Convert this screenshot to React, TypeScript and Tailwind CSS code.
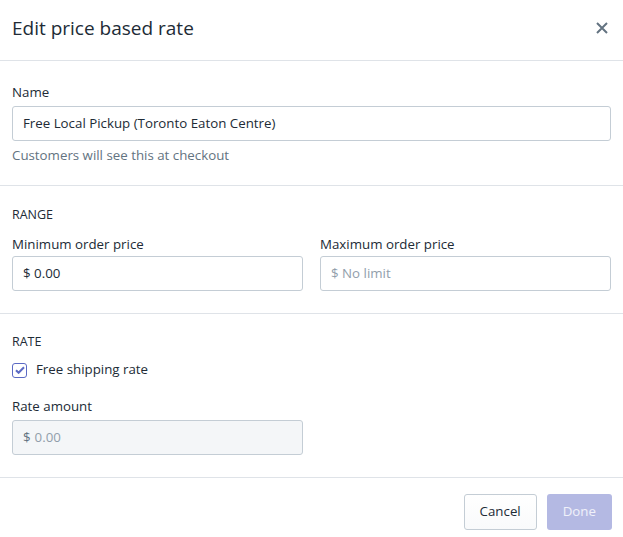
import React from 'react';

const font = { fontFamily: '"Open Sans", "Noto Sans", Arial, sans-serif' };

const Label: React.FC<{ children: React.ReactNode; className?: string }> = ({ children, className = 'mb-1' }) => (
  <div className={`text-[13.3px] leading-5 text-[#212b36] ${className}`}>{children}</div>
);

const Heading: React.FC<{ children: React.ReactNode }> = ({ children }) => (
  <div className="text-[12.5px] leading-4 font-medium uppercase text-[#212b36]">{children}</div>
);

const fieldClass =
  'h-[35px] flex items-center px-[10px] border border-[#c4cdd5] rounded-[3px] text-[13.3px]';

export default function App() {
  return (
    <div className="w-[623px] h-[537px] bg-white overflow-hidden text-[#212b36]" style={font}>
      {/* Header */}
      <div className="h-[61px] flex items-center justify-between pl-3 pr-[15px] pb-[4px] border-b border-[#dfe3e8]">
        <h2 className="text-[19px] leading-7 text-[#212b36]">Edit price based rate</h2>
        <button className="text-[#637381]">
          <svg width="12" height="12" viewBox="0 0 12 12" fill="none" stroke="currentColor" strokeWidth="2">
            <path d="M1 1l10 10M11 1L1 11" />
          </svg>
        </button>
      </div>

      {/* Name */}
      <div className="px-3 pt-[21px] pb-5 border-b border-[#dfe3e8]">
        <Label>Name</Label>
        <div className={fieldClass}>Free Local Pickup (Toronto Eaton Centre)</div>
        <div className="mt-1 text-[13.3px] leading-5 text-[#637381]">Customers will see this at checkout</div>
      </div>

      {/* Range */}
      <div className="px-3 pt-[21px] pb-[22px] border-b border-[#dfe3e8]">
        <Heading>Range</Heading>
        <div className="grid grid-cols-2 gap-[17px] mt-[11px]">
          <div>
            <Label className="mb-[2px]">Minimum order price</Label>
            <div className={fieldClass}>$ 0.00</div>
          </div>
          <div>
            <Label className="mb-[2px]">Maximum order price</Label>
            <div className={`${fieldClass} text-[#919eab]`}>$ No limit</div>
          </div>
        </div>
      </div>

      {/* Rate */}
      <div className="px-3 pt-5 pb-[22px] border-b border-[#dfe3e8]">
        <Heading>Rate</Heading>
        <label className="mt-[10px] flex items-center gap-[9px] h-5">
          <span className="w-[15px] h-[15px] rounded-[3px] border border-[#5c6ac4] flex items-center justify-center">
            <svg width="10" height="8" viewBox="0 0 10 8" fill="none" stroke="#5c6ac4" strokeWidth="2">
              <path d="M1 4.2l2.6 2.6L9 1.2" />
            </svg>
          </span>
          <span className="text-[13.3px]">Free shipping rate</span>
        </label>
        <div className="mt-4 grid grid-cols-2 gap-[17px]">
          <div>
            <Label>Rate amount</Label>
            <div className={`${fieldClass} bg-[#f4f6f8]`}>
              <span className="text-[#637381]">$</span>
              <span className="ml-1 text-[#919eab]">0.00</span>
            </div>
          </div>
        </div>
      </div>

      {/* Footer */}
      <div className="flex justify-end gap-[10px] pl-3 pr-[11px] pt-4">
        <button className="h-9 px-[15px] rounded-[3px] border border-[#c4cdd5] bg-gradient-to-b from-white to-[#f9fafb] text-[13.3px] text-[#212b36]">
          Cancel
        </button>
        <button className="h-9 px-4 rounded-[3px] bg-[#b4b9e3] text-[13.3px] text-white/80">Done</button>
      </div>
    </div>
  );
}
